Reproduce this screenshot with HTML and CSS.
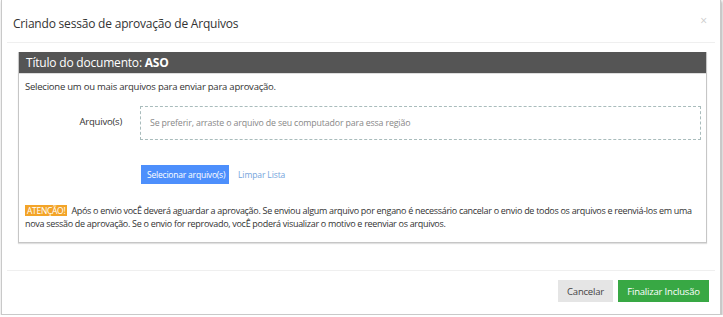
FILE: index.html
```html
<!DOCTYPE html>
<html lang="pt-BR">
<head>
<meta charset="utf-8">
<title>Criando sessão de aprovação de Arquivos</title>
<link rel="stylesheet" href="styles.css">
</head>
<body>
<div class="modal">
  <div class="modal-header">
    <h4 class="modal-title">Criando sessão de aprovação de Arquivos</h4>
    <span class="close">×</span>
  </div>
  <div class="modal-body">
    <div class="panel">
      <div class="panel-heading">Título do documento: <b>ASO</b></div>
      <div class="panel-body">
        <p class="intro">Selecione um ou mais arquivos para enviar para aprovação.</p>
        <div class="form-row">
          <label class="label">Arquivo(s)</label>
          <div class="dropzone">Se preferir, arraste o arquivo de seu computador para essa região</div>
        </div>
        <div class="actions">
          <button class="btn-blue">Selecionar arquivo(s)</button>
          <a class="link">Limpar Lista</a>
        </div>
        <p class="warning"><span class="badge">ATENÇÃO!</span><span class="msg">Após o envio vocÊ deverá aguardar a aprovação. Se enviou algum arquivo por engano é necessário cancelar o envio de todos os arquivos e reenviá-los em uma nova sessão de aprovação. Se o envio for reprovado, vocÊ poderá visualizar o motivo e reenviar os arquivos.</span></p>
      </div>
    </div>
  </div>
  <div class="modal-footer">
    <button class="btn-gray">Cancelar</button>
    <button class="btn-green">Finalizar Inclusão</button>
  </div>
</div>
</body>
</html>
```
FILE: styles.css
```css
* { box-sizing: border-box; }
html, body { margin: 0; padding: 0; background: #fff; }
body { font-family: "Open Sans", "DejaVu Sans", sans-serif; color: #333; }

.modal {
  margin: -1px 2px 0 1px;
  height: 316px;
  border: 1px solid #c9c9c9;
  box-shadow: 1px 2px 3px rgba(0,0,0,0.35);
  background: #fff;
  display: flex;
  flex-direction: column;
}

.modal-header {
  height: 43px;
  margin: 0 5px;
  border-bottom: 1px solid #efefef;
  display: flex;
  align-items: center;
  justify-content: space-between;
  padding: 5px 8px 0 6px;
}
.modal-title {
  margin: 0;
  font-size: 12px;
  font-weight: 400;
  color: #333;
  letter-spacing: -0.2px;
}
.close {
  color: #ccc;
  font-size: 12px;
  align-self: flex-start;
  margin-top: 7px;
}

.modal-body {
  padding: 9px 13px 0 16px;
}

.panel {
  border: 1px solid #c6c6c6;
  border-top: 0;
  box-shadow: 0 1px 1px rgba(0,0,0,0.12);
}
.panel-heading {
  background: #555;
  color: #fff;
  height: 22px;
  line-height: 22px;
  font-size: 12px;
  padding-left: 7px;
  border-bottom: 1px solid #ddd;
  letter-spacing: -0.2px;
}
.panel-heading b { font-weight: 700; }

.panel-body {
  padding: 6px 5px 12px 6px;
  font-size: 9.5px;
}
.intro {
  margin: 0;
  line-height: 14px;
  letter-spacing: -0.23px;
}

.form-row {
  display: grid;
  grid-template-columns: 115px 1fr;
  margin-top: 12px;
}
.label {
  text-align: right;
  padding-right: 18px;
  align-self: center;
  margin-top: -4px;
  letter-spacing: -0.2px;
}
.dropzone {
  height: 34px;
  border: 1px dashed #a9bcbc;
  display: flex;
  align-items: center;
  padding-left: 9px;
  font-size: 8.8px;
  color: #888;
  letter-spacing: -0.15px;
}

.actions {
  margin-top: 25px;
  padding-left: 116px;
  display: flex;
  align-items: center;
  gap: 9px;
}
.btn-blue {
  background: #4d8ffc;
  border: 0;
  color: #fff;
  font-family: inherit;
  font-size: 8.5px;
  height: 19px;
  padding: 0 6px;
  width: 88px;
  white-space: nowrap;
  letter-spacing: -0.2px;
}
.link {
  color: #74a4dc;
  font-size: 8.5px;
  letter-spacing: -0.1px;
}

.warning {
  margin: 20px 0 0;
  line-height: 13px;
  font-size: 9px;
  color: #333;
  letter-spacing: -0.3px;
}
.badge {
  display: inline-block;
  background: #f3a428;
  color: #fff;
  padding: 0 2px;
  line-height: 11px;
  font-size: 8.5px;
  letter-spacing: -0.3px;
  margin-right: 4px;
}

.modal-footer {
  margin: 27px 5px 0;
  border-top: 1px solid #efefef;
  padding: 9px 6px 0 0;
  display: flex;
  justify-content: flex-end;
  gap: 5px;
}
.btn-gray, .btn-green {
  height: 22px;
  border: 0;
  font-family: inherit;
  font-size: 9.5px;
  white-space: nowrap;
  letter-spacing: -0.2px;
}
.btn-gray {
  background: #e5e5e5;
  color: #444;
  width: 55px;
}
.btn-green {
  background: #38a844;
  color: #fff;
  width: 91px;
}
```
